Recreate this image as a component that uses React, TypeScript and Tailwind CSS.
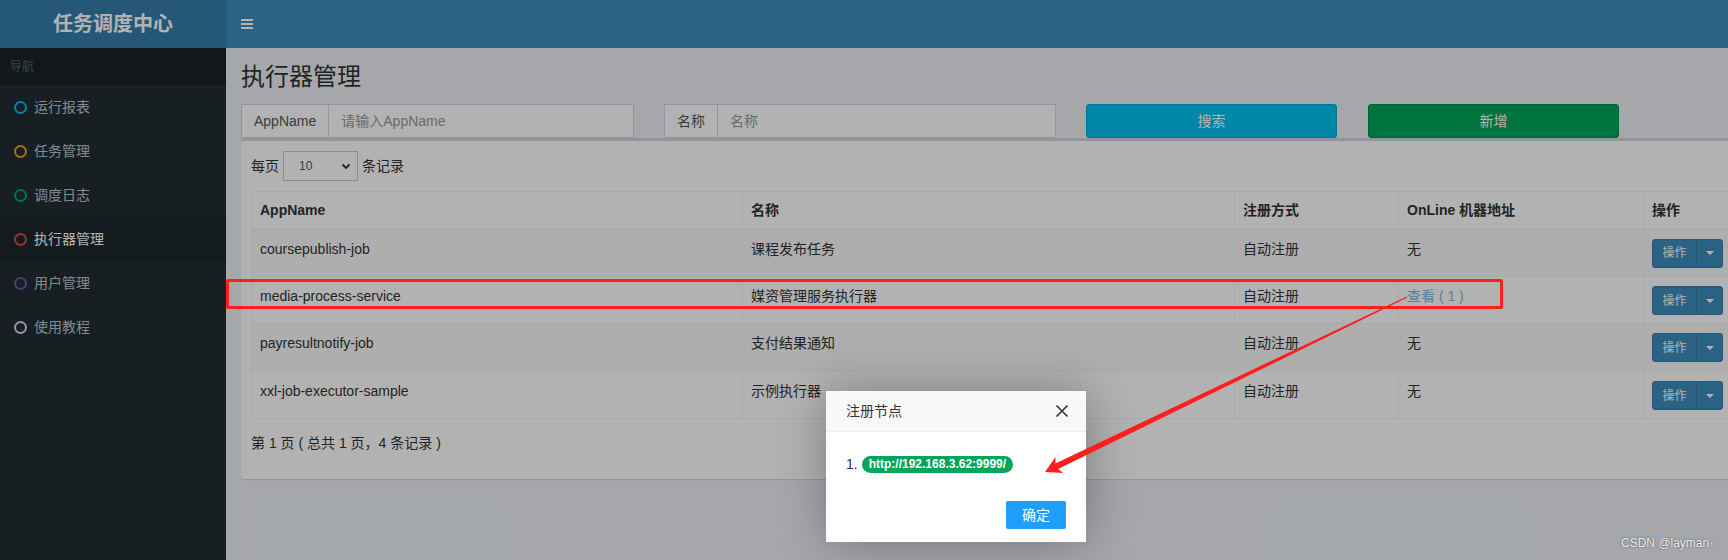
import React from 'react';

const MENU = [
    { label: '运行报表', ring: 'border-[#00c0ef]' },
    { label: '任务管理', ring: 'border-[#f39c12]' },
    { label: '调度日志', ring: 'border-[#00a65a]' },
    { label: '执行器管理', ring: 'border-[#dd4b39]', active: true },
    { label: '用户管理', ring: 'border-[#605ca8]' },
    { label: '使用教程', ring: 'border-[#d2d6de]' },
];

const ROWS = [
    { app: 'coursepublish-job', name: '课程发布任务', online: false, cls: 'h-[48px] bg-[#f9f9f9]' },
    { app: 'media-process-service', name: '媒资管理服务执行器', online: true, cls: 'h-[47px] bg-white' },
    { app: 'payresultnotify-job', name: '支付结果通知', online: false, cls: 'h-[48px] bg-[#f9f9f9]' },
    { app: 'xxl-job-executor-sample', name: '示例执行器', online: false, cls: 'h-[47px] bg-white' },
];

const OpButton = () => (
    <div className="flex h-[29px] w-[71px] rounded-[3px] border border-[#367fa9] bg-[#3c8dbc] text-white text-[12px]">
        <span className="flex-1 flex items-center justify-center">操作</span>
        <span className="w-[26px] border-l border-[#367fa9] flex items-center justify-center">
            <span className="w-0 h-0 border-x-[4px] border-x-transparent border-t-[4px] border-t-white" />
        </span>
    </div>
);

export default function App() {
    return (
        <div className="relative w-[1728px] h-[560px] overflow-hidden flex text-[14px] text-[#333] font-['Liberation_Sans','Noto_Sans_CJK_SC',sans-serif]">
            {/* sidebar */}
            <aside className="w-[226px] shrink-0 bg-[#222d32] flex flex-col">
                <div className="h-[48px] bg-[#367fa9] flex items-center justify-center text-white text-[20px] font-bold">任务调度中心</div>
                <div className="h-[37px] bg-[#1a2226] text-[#4b646f] text-[12px] flex items-center pl-[10px]">导航</div>
                {MENU.map(m => (
                    <div key={m.label} className={`h-[44px] flex items-center pl-[14px] ${m.active ? 'bg-[#1e282c] text-white' : 'text-[#b8c7ce]'}`}>
                        <span className={`w-[13px] h-[13px] rounded-full border-[2.5px] ${m.ring}`} />
                        <span className="ml-[7px] text-[14px] leading-[20px]">{m.label}</span>
                    </div>
                ))}
            </aside>

            {/* main */}
            <div className="flex-1 flex flex-col bg-[#ecf0f5] min-w-0">
                <header className="h-[48px] shrink-0 bg-[#3c8dbc] flex items-center px-[15px]">
                    <div className="flex flex-col gap-[2px]">
                        <span className="w-[12px] h-[2px] bg-white" />
                        <span className="w-[12px] h-[2px] bg-white" />
                        <span className="w-[12px] h-[2px] bg-white" />
                    </div>
                </header>

                <div className="pl-[15px] pt-[16px]">
                    <h1 className="text-[24px] leading-[26px] text-[#333]">执行器管理</h1>

                    <div className="flex mt-[14px] h-[34px]">
                        <div className="w-[393px] flex border border-[#d2d6de] bg-white">
                            <span className="px-[12px] flex items-center border-r border-[#d2d6de] text-[#555]">AppName</span>
                            <span className="px-[12px] flex items-center text-[#999]">请输入AppName</span>
                        </div>
                        <div className="w-[392px] ml-[30px] flex border border-[#d2d6de] bg-white">
                            <span className="px-[12px] flex items-center border-r border-[#d2d6de] text-[#555]">名称</span>
                            <span className="px-[12px] flex items-center text-[#999]">名称</span>
                        </div>
                        <div className="w-[251px] ml-[30px] rounded-[3px] border border-[#00acd6] bg-[#00c0ef] text-white flex items-center justify-center">搜索</div>
                        <div className="w-[251px] ml-[31px] rounded-[3px] border border-[#008d4c] bg-[#00a65a] text-white flex items-center justify-center">新增</div>
                    </div>

                    <div className="w-[1520px] h-[341px] bg-white border-t-[3px] border-[#d2d6de] rounded-[3px] shadow-[0_1px_1px_rgba(0,0,0,0.1)] p-[10px]">
                        <div className="flex items-center h-[30px]">
                            <span>每页</span>
                            <div className="ml-[4px] w-[75px] h-[30px] border border-[#ccc] flex items-center justify-between pl-[15px] pr-[6px] text-[12px] text-[#555]">
                                <span>10</span>
                                <svg width="10" height="10" viewBox="0 0 10 10"><path d="M1.5 3.5 L5 7 L8.5 3.5" fill="none" stroke="#333" strokeWidth="1.8" /></svg>
                            </div>
                            <span className="ml-[4px]">条记录</span>
                        </div>

                        <table className="mt-[10px] border-collapse border border-[#f4f4f4] w-[1492px] table-fixed">
                            <colgroup>
                                <col className="w-[491px]" />
                                <col className="w-[492px]" />
                                <col className="w-[164px]" />
                                <col className="w-[245px]" />
                                <col className="w-[100px]" />
                            </colgroup>
                            <thead>
                                <tr className="h-[37px]">
                                    {['AppName', '名称', '注册方式', 'OnLine 机器地址', '操作'].map(h => (
                                        <th key={h} className="text-left font-bold px-[8px] border border-[#f4f4f4] border-b-2 leading-[20px]">{h}</th>
                                    ))}
                                </tr>
                            </thead>
                            <tbody>
                                {ROWS.map(r => (
                                    <tr key={r.app} className={r.cls}>
                                        <td className="align-top px-[8px] pt-[9px] border border-[#f4f4f4] leading-[20px]">{r.app}</td>
                                        <td className="align-top px-[8px] pt-[9px] border border-[#f4f4f4] leading-[20px]">{r.name}</td>
                                        <td className="align-top px-[8px] pt-[9px] border border-[#f4f4f4] leading-[20px]">自动注册</td>
                                        <td className="align-top px-[8px] pt-[9px] border border-[#f4f4f4] leading-[20px]">
                                            {r.online ? <span className="text-[#7fb6d8]">查看 ( 1 )</span> : '无'}
                                        </td>
                                        <td className="align-top px-[8px] pt-[9px] border border-[#f4f4f4]"><OpButton /></td>
                                    </tr>
                                ))}
                            </tbody>
                        </table>

                        <div className="mt-[14px] leading-[20px]">第 1 页 ( 总共 1 页，4 条记录 )</div>
                    </div>
                </div>
            </div>

            {/* modal backdrop */}
            <div className="absolute inset-0 bg-[rgba(0,0,0,0.3)]" />

            {/* layer dialog */}
            <div className="absolute left-[826px] top-[391px] w-[260px] h-[151px] bg-white shadow-[1px_1px_50px_rgba(0,0,0,0.3)] flex flex-col">
                <div className="h-[41px] bg-[#f8f8f8] border-b border-[#eee] flex items-center justify-between pl-[20px] pr-[17px] text-[14px] text-[#333]">
                    <span>注册节点</span>
                    <svg width="14" height="14" viewBox="0 0 14 14"><path d="M1.5 1.5 L12.5 12.5 M12.5 1.5 L1.5 12.5" stroke="#333" strokeWidth="1.6" /></svg>
                </div>
                <div className="px-[20px] pt-[20px] h-[64px] flex items-start">
                    <div className="h-[24px] flex items-center">
                        <span className="text-[14px] text-[#333]">1.</span>
                        <span className="ml-[4px] h-[17px] px-[7px] rounded-[10px] bg-[#00a65a] text-white text-[12px] font-bold flex items-center">http://192.168.3.62:9999/</span>
                    </div>
                </div>
                <div className="flex justify-end pr-[20px] pt-[5px]">
                    <span className="w-[60px] h-[28px] rounded-[2px] bg-[#1e9fff] text-white text-[14px] flex items-center justify-center">确定</span>
                </div>
            </div>

            {/* annotations */}
            <div className="absolute left-[226px] top-[279px] w-[1277px] h-[30px] border-[3px] border-[#ff1e1e] rounded-[2px]" />
            <svg className="absolute left-0 top-0" width="1728" height="560" viewBox="0 0 1728 560">
                <polygon fill="#ff1e1e" points="1406.7,296.4 1407.3,297.6 1058.0,469.0 1063.3,473.1 1045,472 1055.5,456.9 1055.4,463.6" />
            </svg>

            <div className="absolute left-[1621px] top-[535px] text-[12px] leading-[16px] text-[#eee] [text-shadow:0_0_2px_rgba(0,0,0,0.6)]">CSDN @layman·</div>
        </div>
    );
}
